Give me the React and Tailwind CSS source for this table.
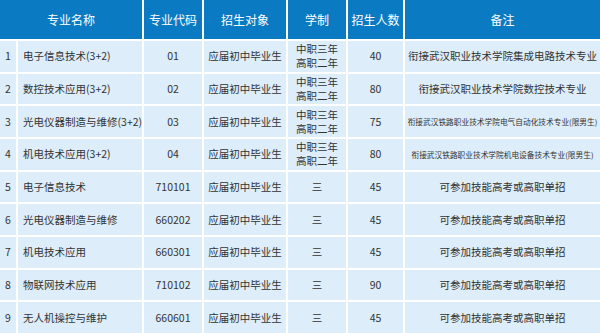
const rows = [
  { no: 1, name: "电子信息技术(3+2)", code: "01", target: "应届初中毕业生", years: ["中职三年", "高职二年"], count: 40, note: "衔接武汉职业技术学院集成电路技术专业" },
  { no: 2, name: "数控技术应用(3+2)", code: "02", target: "应届初中毕业生", years: ["中职三年", "高职二年"], count: 80, note: "衔接武汉职业技术学院数控技术专业" },
  { no: 3, name: "光电仪器制造与维修(3+2)", code: "03", target: "应届初中毕业生", years: ["中职三年", "高职二年"], count: 75, note: "衔接武汉铁路职业技术学院电气自动化技术专业(限男生)", small: true },
  { no: 4, name: "机电技术应用(3+2)", code: "04", target: "应届初中毕业生", years: ["中职三年", "高职二年"], count: 80, note: "衔接武汉铁路职业技术学院机电设备技术专业(限男生)", small: true },
  { no: 5, name: "电子信息技术", code: "710101", target: "应届初中毕业生", years: ["三"], count: 45, note: "可参加技能高考或高职单招" },
  { no: 6, name: "光电仪器制造与维修", code: "660202", target: "应届初中毕业生", years: ["三"], count: 45, note: "可参加技能高考或高职单招" },
  { no: 7, name: "机电技术应用", code: "660301", target: "应届初中毕业生", years: ["三"], count: 45, note: "可参加技能高考或高职单招" },
  { no: 8, name: "物联网技术应用", code: "710102", target: "应届初中毕业生", years: ["三"], count: 90, note: "可参加技能高考或高职单招" },
  { no: 9, name: "无人机操控与维护", code: "660601", target: "应届初中毕业生", years: ["三"], count: 45, note: "可参加技能高考或高职单招" },
];

const base = "bg-[#ddedf9] flex items-center justify-center text-[#333] overflow-hidden";
const cell = `${base} text-[10.5px]`;
const head = "bg-[#0a7bc3] flex items-center justify-center text-white text-[12px]";

export default function App() {
  return (
    <div
      className="w-[600px] h-[333px] bg-white grid grid-cols-[16px_124px_58px_82px_58px_55px_195px] grid-rows-[39px_repeat(9,minmax(0,1fr))] gap-[2px] overflow-hidden"
      style={{ fontFamily: '"Noto Sans CJK SC", "Noto Sans", sans-serif' }}
    >
      <div className={`${head} col-span-2`}>专业名称</div>
      <div className={head}>专业代码</div>
      <div className={head}>招生对象</div>
      <div className={head}>学制</div>
      <div className={head}>招生人数</div>
      <div className={head}>备注</div>

      {rows.map((r) => (
        <div key={r.no} className="contents">
          <div className={cell}>{r.no}</div>
          <div className={`${base} text-[10.5px] justify-start pl-[5px] whitespace-nowrap`}>{r.name}</div>
          <div className={cell}>{r.code}</div>
          <div className={cell}>{r.target}</div>
          <div className={`${cell} flex-col leading-[14px]`}>
            {r.years.map((y) => (
              <span key={y}>{y}</span>
            ))}
          </div>
          <div className={cell}>{r.count}</div>
          {r.small ? (
            <div className={`${base} text-[7.7px] whitespace-nowrap`}>{r.note}</div>
          ) : (
            <div className={`${cell} whitespace-nowrap`}>{r.note}</div>
          )}
        </div>
      ))}
    </div>
  );
}
